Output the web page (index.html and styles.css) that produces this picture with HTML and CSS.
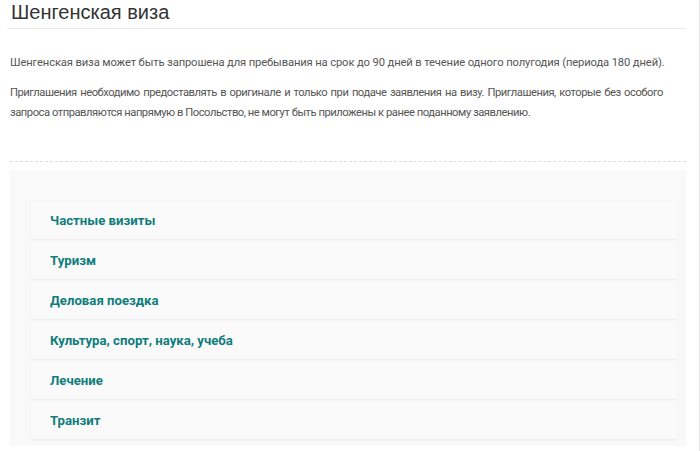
FILE: index.html
```html
<!DOCTYPE html>
<html lang="ru">
<head>
    <meta charset="UTF-8">
    <title>Шенгенская виза</title>
    <link rel="stylesheet" href="styles.css">
</head>
<body>
    <div class="page">
        <h1 class="title">Шенгенская виза</h1>

        <div class="intro">
            <p>Шенгенская виза может быть запрошена для пребывания на срок до 90 дней в течение одного полугодия (периода 180 дней).</p>
            <p class="note">Приглашения необходимо предоставлять в оригинале и только при подаче заявления на визу. Приглашения, которые без особого запроса отправляются напрямую в Посольство, не могут быть приложены к ранее поданному заявлению.</p>
        </div>

        <div class="types">
            <div class="type"><a href="#">Частные визиты</a></div>
            <div class="type"><a href="#">Туризм</a></div>
            <div class="type"><a href="#">Деловая поездка</a></div>
            <div class="type"><a href="#">Культура, спорт, наука, учеба</a></div>
            <div class="type"><a href="#">Лечение</a></div>
            <div class="type"><a href="#">Транзит</a></div>
        </div>
    </div>
</body>
</html>
```

FILE: styles.css
```css
/* General Styling */
body {
    margin: 0;
    background: #fff;
    font-family: Roboto, "Liberation Sans", Arial, sans-serif;
    color: #555;
    height: 451px;
    overflow: hidden;
    border-right: 1px solid #e6e6e6;
}

.page {
    padding: 0 13px 0 10px;
}

.title {
    margin: 0 0 0 -3px;
    padding: 1px 0 5px 4px;
    font-family: "Liberation Sans", Arial, sans-serif;
    font-size: 20px;
    font-weight: normal;
    line-height: 22px;
    color: #333;
    border-bottom: 1px solid #e8e8e8;
}

.intro {
    padding: 24px 0 38px;
    border-bottom: 1px dashed #ddd;
}

.intro p {
    margin: 0 0 10px;
    font-size: 11.2px;
    letter-spacing: -0.12px;
    line-height: 20px;
}

.intro .note {
    margin-right: 23px;
    letter-spacing: -0.46px;
    text-align: justify;
}

.intro p:last-child {
    margin-bottom: 0;
}

/* Visa types */
.types {
    margin-top: 8px;
    background: #f9f9f9;
    padding: 31px 9px 7px 21px;
}

.type {
    height: 38px;
    display: flex;
    align-items: center;
    padding-left: 19px;
    margin-bottom: 2px;
    background: #fafafa;
    box-shadow: 0 1px 2px rgba(0, 0, 0, 0.06);
}

.type:last-child {
    margin-bottom: 0;
}

.type a {
    font-size: 13.2px;
    font-weight: bold;
    color: #0f7d7c;
    text-decoration: none;
}
```
